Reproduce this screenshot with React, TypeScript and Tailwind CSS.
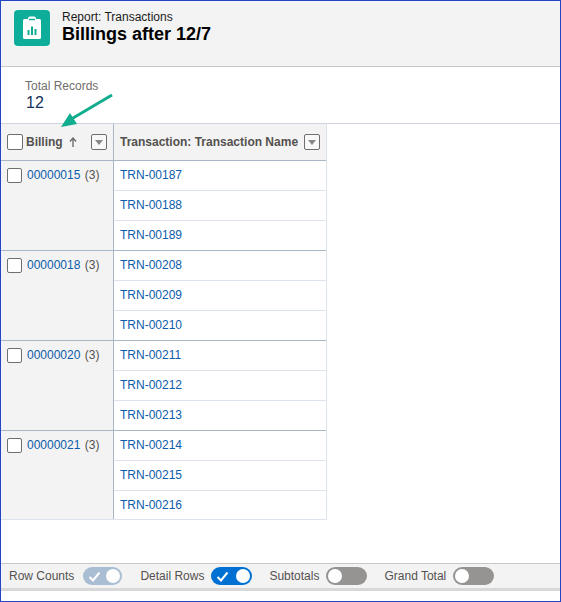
import React from 'react';

const groups = [
  { id: '00000015', rows: ['TRN-00187', 'TRN-00188', 'TRN-00189'] },
  { id: '00000018', rows: ['TRN-00208', 'TRN-00209', 'TRN-00210'] },
  { id: '00000020', rows: ['TRN-00211', 'TRN-00212', 'TRN-00213'] },
  { id: '00000021', rows: ['TRN-00214', 'TRN-00215', 'TRN-00216'] },
];

function Box({ className = '' }: { className?: string }) {
  return <span className={`block shrink-0 bg-white border border-[#6f6f6f] rounded-[2px] ${className}`} />;
}

function MenuButton() {
  return (
    <span className="flex items-center justify-center w-[16px] h-[16px] shrink-0 bg-[#f8f8f8] border border-[#706e6b] rounded-[2px]">
      <svg width="8" height="5" viewBox="0 0 8 5"><path d="M0 0h8L4 5z" fill="#8a8886" /></svg>
    </span>
  );
}

function Toggle({ on, dim, label }: { on: boolean; dim?: boolean; label: string }) {
  const track = !on ? 'w-[41px] bg-[#969492]' : dim ? 'w-[39px] ml-[2px] mr-[1px] bg-[#a9bdd3]' : 'w-[41px] bg-[#0070d2]';
  return (
    <div className="flex items-center gap-[7px]">
      <span className="text-[12px] text-[#54514f]">{label}</span>
      <span className={`flex items-center h-[18px] rounded-full px-[2px] ${track} ${on ? 'justify-between' : ''}`}>
        {on && (
          <svg className="ml-[3px]" width="13" height="11" viewBox="0 0 13 11" fill="none">
            <path d="M1.5 6l3.5 3.5L11.5 1.5" stroke="white" strokeWidth="2" />
          </svg>
        )}
        <span className="block w-[14px] h-[14px] rounded-full bg-white" />
      </span>
    </div>
  );
}

export default function App() {
  return (
    <div className="relative w-[561px] h-[602px] flex flex-col bg-white border border-[#2145c4] font-['Liberation_Sans',Arial,sans-serif] overflow-hidden">
      <header className="h-[66px] shrink-0 flex items-start gap-[12px] pl-[13px] pt-[9px] bg-[#f3f3f3] border-b border-[#c9c7c5]">
        <div className="flex items-center justify-center w-[36px] h-[36px] rounded-[4px] bg-[#0ead9a]">
          <svg width="22" height="24" viewBox="0 0 22 24">
            <path d="M3.5 3H7V2.5A2 2 0 0 1 9 .5h4a2 2 0 0 1 2 2V3h3.500A1.500 1.500 0 0 1 20 4.500v17a1.500 1.500 0 0 1-1.500 1.500h-15A1.500 1.500 0 0 1 2 21.500v-17A1.500 1.500 0 0 1 3.500 3z" fill="white" />
            <path d="M8 3.500h6" stroke="#0ead9a" strokeWidth="1.500" />
            <path d="M6.500 14h2v5h-2zM10 10.500h2V19h-2zM13.500 13h2v6h-2z" fill="#0ead9a" />
          </svg>
        </div>
        <div className="pt-[1px]">
          <div className="text-[12px] leading-[13px] text-[#1a1a1a]">Report: Transactions</div>
          <div className="text-[18px] leading-[20px] font-bold text-black">Billings after 12/7</div>
        </div>
      </header>

      <section className="h-[57px] shrink-0 pl-[24px] pt-[12px] border-b border-[#cfd4dc]">
        <div className="text-[12px] leading-[14px] text-[#706e6b]">Total Records</div>
        <div className="text-[16px] leading-[20px] text-[#16325c] pl-[1px]">12</div>
      </section>

      <div className="flex-1">
        <div className="w-[326px] border-r border-b border-[#dde3ea]">
          <div className="flex h-[37px] bg-[#f3f3f3] border-b border-[#a8b7c7]">
            <div className="flex items-center w-[113px] shrink-0 pl-[6px] pr-[6px] border-r border-[#a8b7c7]">
              <Box className="w-[16px] h-[16px]" />
              <span className="ml-[3px] text-[12px] font-bold text-[#54514f]">Billing</span>
              <svg className="ml-[6px]" width="8" height="10" viewBox="0 0 8 10" fill="none">
                <path d="M4 10V2M1 4.500L4 1l3 3.500" stroke="#706e6b" strokeWidth="1.400" />
              </svg>
              <span className="ml-auto"><MenuButton /></span>
            </div>
            <div className="flex items-center flex-1 pl-[6px] pr-[6px]">
              <span className="text-[12px] font-bold text-[#54514f] whitespace-nowrap">Transaction: Transaction Name</span>
              <span className="ml-auto"><MenuButton /></span>
            </div>
          </div>
          {groups.map((group, i) => (
            <div key={group.id} className={`flex ${i > 0 ? 'border-t border-[#a8b7c7]' : ''}`}>
              <div className="flex items-start w-[113px] shrink-0 pl-[6px] pt-[7px] bg-[#f3f3f3] border-r border-[#a8b7c7]">
                <Box className="w-[15px] h-[15px]" />
                <span className="ml-[5px] text-[12px] leading-[15px] whitespace-nowrap">
                  <span className="text-[#0b5cab]">{group.id}</span>
                  <span className="ml-[1px] text-[#54514f]"> (3)</span>
                </span>
              </div>
              <div className="flex-1">
                {group.rows.map((row, j) => {
                  const last = i === groups.length - 1 && j === group.rows.length - 1;
                  return (
                    <div key={row} className={`flex items-center pl-[6px] text-[12px] text-[#0b5cab] ${j === 0 ? 'h-[29px] pb-[2px]' : last ? 'h-[29px] border-t border-[#dde3ea]' : 'h-[30px] pb-[2px] border-t border-[#dde3ea]'}`}>
                      {row}
                    </div>
                  );
                })}
              </div>
            </div>
          ))}
        </div>
      </div>

      <footer className="shrink-0 mb-[10px] border-t border-[#c9c7c5] border-b-[3px] border-b-[#d8d8d8] bg-[#f3f3f3] h-[28px] flex items-center gap-[17px] pl-[8px]">
        <Toggle label="Row Counts" on dim />
        <Toggle label="Detail Rows" on />
        <Toggle label="Subtotals" on={false} />
        <Toggle label="Grand Total" on={false} />
      </footer>

      <svg className="absolute left-[55px] top-[91px]" width="60" height="40" viewBox="0 0 60 40" fill="none">
        <path d="M56 3L12 29" stroke="#12ad8e" strokeWidth="3" />
        <path d="M5 35l16-3-7-11z" fill="#12ad8e" />
      </svg>
    </div>
  );
}
